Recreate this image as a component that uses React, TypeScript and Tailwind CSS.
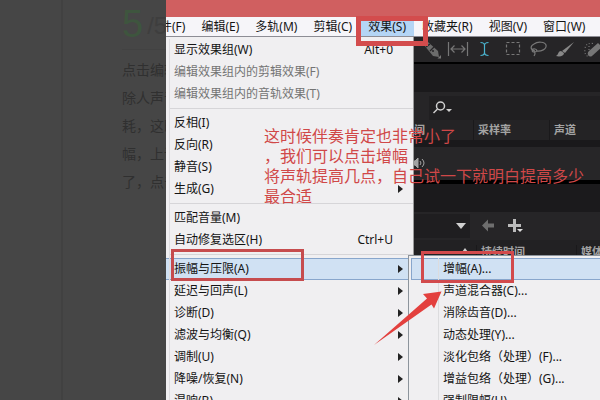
import React from 'react';

interface MenuEntry {
  label: string;
  shortcut?: string;
  disabled?: boolean;
  submenu?: boolean;
  active?: boolean;
}

const menuBar = ['文件(F)', '编辑(E)', '多轨(M)', '剪辑(C)', '效果(S)', '收藏夹(R)', '视图(V)', '窗口(W)'];

const menuGroups: MenuEntry[][] = [
  [
    { label: '显示效果组(W)', shortcut: 'Alt+0' },
    { label: '编辑效果组内的剪辑效果(F)', disabled: true },
    { label: '编辑效果组内的音轨效果(T)', disabled: true },
  ],
  [{ label: '反相(I)' }, { label: '反向(R)' }, { label: '静音(S)' }, { label: '生成(G)', submenu: true }],
  [{ label: '匹配音量(M)' }, { label: '自动修复选区(H)', shortcut: 'Ctrl+U' }],
  [
    { label: '振幅与压限(A)', submenu: true, active: true },
    { label: '延迟与回声(L)', submenu: true },
    { label: '诊断(D)', submenu: true },
    { label: '滤波与均衡(Q)', submenu: true },
    { label: '调制(U)', submenu: true },
    { label: '降噪/恢复(N)', submenu: true },
    { label: '混响(B)', submenu: true },
  ],
];

const submenuItems = [
  '增幅(A)...',
  '声道混合器(C)...',
  '消除齿音(D)...',
  '动态处理(Y)...',
  '淡化包络（处理）(F)...',
  '增益包络（处理）(G)...',
  '强制限幅(H)...',
];

const articleLines = ['点击编辑', '除人声音', '耗，这时', '幅，上调', '了，点击'];

function Article() {
  return (
    <aside className="flex w-[166px] shrink-0 overflow-hidden bg-[#464646]">
      <div className="w-[63px] shrink-0 border-r-2 border-[#414141]" />
      <div className="w-[103px] shrink-0 overflow-hidden whitespace-nowrap pl-[59px] text-[#303030]">
        <div className="flex h-[50px] items-end border-b border-[#424242] font-['Liberation_Sans',sans-serif]">
          <span className="text-[38px] leading-[50px] text-[#3e553e]">5</span>
          <span className="pl-1 text-2xl leading-[46px] text-[#3e3e3e]">/5</span>
        </div>
        <div className="pt-[6px] text-sm leading-7">
          {articleLines.map((line) => (
            <p key={line}>{line}</p>
          ))}
        </div>
      </div>
    </aside>
  );
}

function MenuBar() {
  return (
    <nav className="flex h-5 shrink-0 border-b border-[#8d8d95] bg-[#f6f5f9]">
      <div className="-ml-[26px] flex">
        {menuBar.map((label) => (
          <button
            key={label}
            className={`whitespace-nowrap px-2 leading-[19px] ${label === '效果(S)' ? 'bg-[#b4d5f5]' : ''}`}
          >
            {label}
          </button>
        ))}
      </div>
    </nav>
  );
}

function EffectsMenu() {
  return (
    <div className="w-[248px] shrink-0 border-r border-[#9a9a9a] bg-[#f0eff1] pt-[2px]">
      {menuGroups.map((group, idx) => (
        <div key={idx}>
          {idx > 0 && (
            <div className="ml-[3px] flex h-[7px] items-center border-l border-[#dedde0]">
              <div className="h-px w-full bg-[#d6d5d8]" />
            </div>
          )}
          {group.map((item) => (
            <button
              key={item.label}
              disabled={item.disabled}
              className={`flex h-[22px] w-full items-center whitespace-nowrap border-y pl-[3px] pr-[10px] ${
                item.active ? 'border-[#88a6cc] bg-[#d0e1f3]' : 'border-transparent'
              } ${item.disabled ? 'text-[#747474]' : ''}`}
            >
              <span className="flex-1 border-l border-[#dedde0] pl-1 text-left leading-[22px]">{item.label}</span>
              {item.shortcut && <span className="pr-[10px]">{item.shortcut}</span>}
              {item.submenu && (
                <svg width="5" height="8" viewBox="0 0 5 8" fill="#222">
                  <path d="M0 0l5 4-5 4z" />
                </svg>
              )}
            </button>
          ))}
        </div>
      ))}
    </div>
  );
}

function Submenu() {
  return (
    <div className="absolute bottom-0 left-[242px] right-0 top-[255px] overflow-hidden border-l border-t border-[#8c949c] bg-[#f0eff1] pl-[2px] pt-[2px]">
      {submenuItems.map((label, idx) => (
        <button
          key={label}
          className={`flex h-[22px] w-full items-center whitespace-nowrap border-y border-l ${
            idx === 0 ? 'border-[#88a6cc] bg-[#d0e1f3]' : 'border-transparent'
          }`}
        >
          <span className="ml-[26px] border-l border-[#dcdcde] pl-1 leading-[22px]">{label}</span>
        </button>
      ))}
    </div>
  );
}

function ToolBar() {
  return (
    <div className="h-[27px] shrink-0 overflow-hidden border-b-2 border-black bg-[#262527]">
      <svg width="186" height="25" viewBox="414 37 186 25" fill="none" stroke="#777" strokeWidth="1.2">
        <path d="M424 45l4-3 10 9 1 6-6-1z" fill="#6c6c6c" stroke="none" />
        <path d="M426 47l4-3M430 51l4-4" stroke="#262527" />
        <circle cx="433" cy="51" r="1" fill="#262527" stroke="none" />
        <path d="M441 55v3.500h-3.500z" fill="#777" stroke="none" />
        <path d="M448.500 42v14M467.500 42v14M451 49h14M454.500 45.500l-3.500 3.500 3.500 3.500M461.500 45.500l3.500 3.500-3.500 3.500" />
        <path d="M480.500 42.500q4 0 4 3v7q0 3-4 3M488.500 42.500q-4 0-4 3v7q0 3 4 3" stroke="#4bb5d0" />
        <rect x="506.500" y="42.500" width="13" height="12" strokeDasharray="3 2" />
        <path d="M535 51c-5-1-5-5-1-7 4-3 11-2 12 1 1 4-5 7-10 6M535 49c-3-1-4 3-1 3s4-2 1-3M534 52q2 1 0 4" />
        <path d="M574 42l-9 11-3-2z" fill="#888" stroke="none" />
        <path d="M561 51c-3 0-2 3-5 5 4 1 8 0 8-3z" fill="#888" stroke="none" />
        <path d="M593 43.500q-7-1-8 5t3 8M589 46v8" strokeDasharray="1 2" />
        <path d="M589 51l9-8 4 4-10 9c-3 2-6-2-3-5z" fill="#777" stroke="none" />
      </svg>
    </div>
  );
}

function Workspace() {
  return (
    <div className="flex min-w-0 flex-1 flex-col overflow-hidden bg-[#1b1a1c] text-[11px] font-bold text-[#a3a3a3]">
      <ToolBar />
      <div className="h-7 shrink-0" />
      <div className="shrink-0 bg-[#262527] pl-[15px] pt-1">
        <div className="flex h-6 items-center bg-[#201f21] pl-1">
          <svg width="20" height="16" viewBox="0 0 20 16" fill="none" stroke="#d0d0d0" strokeWidth="1.500">
            <circle cx="7.500" cy="6" r="4" />
            <path d="M4.500 9L0.500 13" />
            <path d="M13 9h6l-3 3z" fill="#d0d0d0" stroke="none" />
          </svg>
        </div>
      </div>
      <div className="flex h-5 shrink-0 items-center bg-[#242325] leading-5">
        <span className="w-[59px] shrink-0">间</span>
        <span className="w-[76px] shrink-0 border-l border-[#1a191b] pl-1">采样率</span>
        <span className="flex-1 border-l border-[#1a191b] pl-1">声道</span>
      </div>
      <div className="h-[7px] shrink-0 bg-[#1a191b]" />
      <div className="h-[37px] shrink-0 border-b-4 border-black bg-[#272628] pt-[9px]">
        <svg width="13" height="14" viewBox="0 0 13 14" fill="none" stroke="#a3a3a3">
          <path d="M0 5h1l3-3v10l-3-3H0z" fill="#a3a3a3" />
          <path d="M6 5q2 2 0 4M8 3q4 4 0 8" />
        </svg>
      </div>
      <div className="h-7 shrink-0" />
      <div className="flex h-7 shrink-0 items-center bg-[#262527]">
        <div className="flex h-6 w-14 items-center justify-end bg-[#1f1e20] pr-1">
          <svg width="10" height="6" viewBox="0 0 10 6" fill="#d0d0d0"><path d="M0 0h10L5 6z" /></svg>
        </div>
        <svg className="ml-3" width="44" height="16" viewBox="0 0 44 16">
          <path d="M0 7.500l6-6v4h6v4H6v4z" fill="#6e6e6e" />
          <path d="M31 1h3v5h5v3h-5v5h-3V9h-5V6h5z" fill="#bbb" />
          <path d="M35 11h6l-3 3z" fill="#ddd" />
        </svg>
      </div>
      <div className="flex h-6 shrink-0 items-center bg-[#222123]">
        <span className="flex w-[62px] shrink-0 justify-end pb-1 pr-2">
          <svg width="6" height="4" viewBox="0 0 6 4" fill="#d0d0d0"><path d="M0 4l3-4 3 4z" /></svg>
        </span>
        <span className="w-[100px] shrink-0 border-l border-[#1a191b] pl-1">持续时间</span>
        <span className="whitespace-nowrap border-l border-[#1a191b] pl-1">媒体类型</span>
      </div>
    </div>
  );
}

// Red boxes, arrow and note drawn over the application
function Annotations() {
  return (
    <>
      <div className="pointer-events-none absolute left-[190px] top-[16px] h-[30px] w-[72px] border-[5px] border-[#d34c4d]" />
      <div className="pointer-events-none absolute left-[5px] top-[249px] h-8 w-[133px] border-[3px] border-[#c64c4e]" />
      <div className="pointer-events-none absolute left-[255px] top-[251px] h-8 w-[93px] border-[3px] border-[#d24a4c]" />
      <svg className="pointer-events-none absolute left-[208px] top-[290px]" width="68" height="56" viewBox="374 290 68 56">
        <path d="M441.500 291.500L423 294l4 4.500L374 345l57.500-40.500 2.500 4z" fill="#e3403e" />
      </svg>
      <p className="pointer-events-none absolute left-[98px] top-[126px] whitespace-nowrap text-base leading-5 text-[#d04848]">
        这时候伴奏肯定也非常小了
        <br />
        ，我们可以点击增幅
        <br />
        将声轨提高几点，自己试一下就明白提高多少
        <br />
        最合适
      </p>
    </>
  );
}

export default function App() {
  return (
    <div className="flex h-screen overflow-hidden bg-[#464646] font-['Noto_Sans','Noto_Sans_CJK_SC',sans-serif] text-xs text-[#141414]">
      <Article />
      <main className="relative flex min-w-0 flex-1 flex-col overflow-hidden">
        <header className="h-[17px] shrink-0 bg-[#d05f60]" />
        <MenuBar />
        <div className="flex min-h-0 flex-1">
          <EffectsMenu />
          <Workspace />
        </div>
        <Submenu />
        <Annotations />
      </main>
    </div>
  );
}
